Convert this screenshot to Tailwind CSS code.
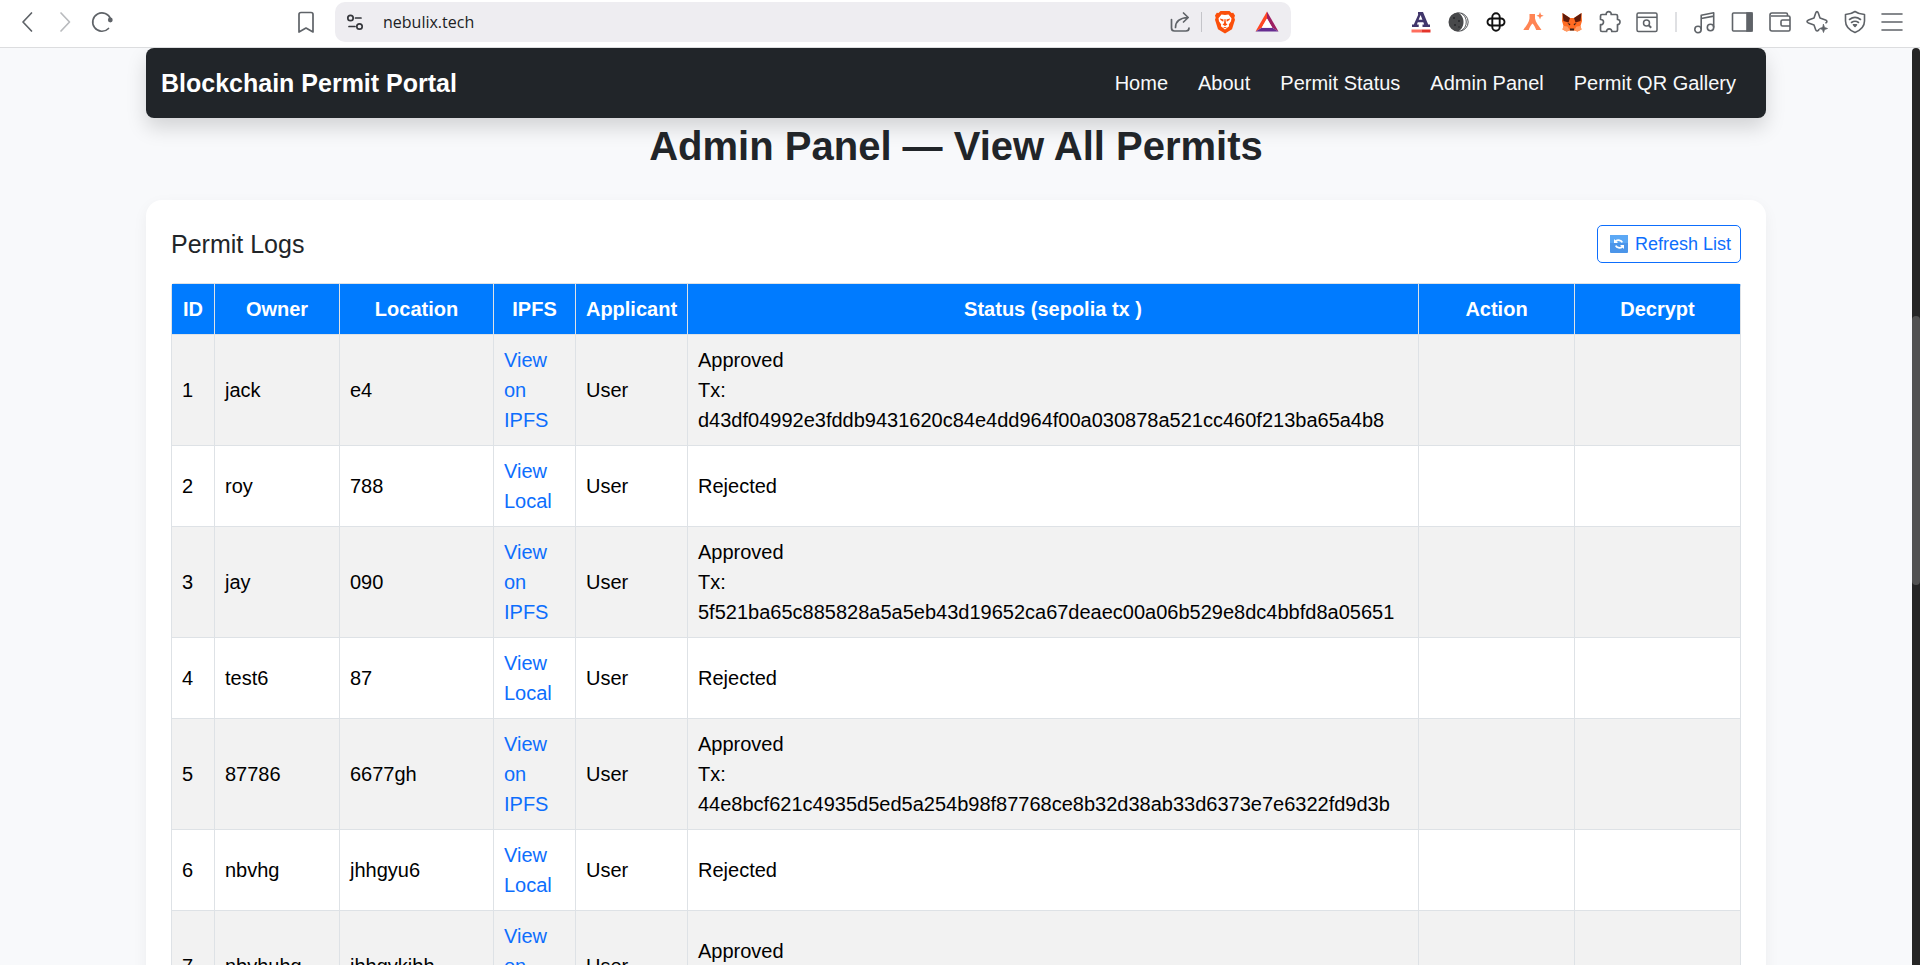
<!DOCTYPE html>
<html lang="en">
<head>
<meta charset="utf-8">
<title>Blockchain Permit Portal</title>
<script src="https://cdn.jsdelivr.net/npm/@tailwindcss/browser@4"></script>
</head>
<body class="flex h-screen flex-col overflow-hidden bg-[#f8f9fb] font-['Liberation_Sans',Arial,sans-serif] text-xl/[30px] text-[#212529]">

<!-- Browser toolbar -->
<header class="flex h-12 shrink-0 items-center border-b border-[#dcdddf] bg-white pr-4 pb-1 pl-[14px] text-[#5f6368]">
  <div class="flex gap-[14px]">
    <button aria-label="Back"><svg class="size-6" viewBox="0 0 24 24" fill="none" stroke="currentColor" stroke-width="1.7" stroke-linecap="round" stroke-linejoin="round"><path d="M17.500 3L9 12l8.500 9"/></svg></button>
    <button aria-label="Forward"><svg class="size-6 text-[#b9bbbe]" viewBox="0 0 24 24" fill="none" stroke="currentColor" stroke-width="1.7" stroke-linecap="round" stroke-linejoin="round"><path d="M9 3l8.500 9L9 21"/></svg></button>
    <button aria-label="Reload"><svg class="size-6" viewBox="0 0 24 24" fill="none" stroke="currentColor" stroke-width="1.7" stroke-linecap="round"><path d="M18.500 18.500A9.200 9.200 0 1 1 20.600 9"/><circle cx="20.300" cy="10" r="2.400" fill="currentColor" stroke="none"/></svg></button>
  </div>
  <button aria-label="Bookmark this page" class="ml-[180px]"><svg class="size-6" viewBox="0 0 24 24" fill="none" stroke="currentColor" stroke-width="1.7" stroke-linejoin="round"><path d="M7 2.500h10a2 2 0 0 1 2 2V22l-7-4-7 4V4.500a2 2 0 0 1 2-2z"/></svg></button>
  <div class="ml-[17px] flex h-10 flex-1 items-center rounded-[10px] bg-[#eeedf1] pr-3 pl-2">
    <button aria-label="Site information"><svg class="size-6" viewBox="0 0 24 24" fill="none" stroke="#35373c" stroke-width="1.7" stroke-linecap="round"><circle cx="7.500" cy="8" r="2.700"/><path d="M12.500 8h5.500M6 16.500h6"/><circle cx="16.500" cy="16.500" r="2.700"/></svg></button>
    <input aria-label="Address" value="nebulix.tech" class="ml-4 min-w-0 flex-1 bg-transparent font-['Open_Sans','Noto_Sans',sans-serif] text-base text-[#202124] outline-none">
    <button aria-label="Share"><svg class="size-6" viewBox="0 0 24 24" fill="none" stroke="currentColor" stroke-width="1.7" stroke-linecap="round" stroke-linejoin="round"><path d="M3.500 9.500V18a3 3 0 0 0 3 3H18a3 3 0 0 0 3-3"/><path d="M7.500 17.500c0-6 4-9.500 12.500-10M15.500 3l4.700 4.500-4.700 4.500"/></svg></button>
    <span class="mx-[9px] h-5 w-px bg-[#c4c4c9]"></span>
    <button aria-label="Brave Shields"><svg class="ml-[2px] size-6" viewBox="0 0 24 24"><path d="M7.500 1h9l2 2 1.700-.2L22 5.500l-.7 2.200.7 2-3 9.500L12 23.500 5 19.200 2 9.700l.7-2L2 5.500l1.800-2.700L5.500 3z" fill="#fb4f0b"/><path d="M8.500 4.500L12 5l3.500-.5 3 3.800-.5 3-2.200 3.200.3 1.800L12 19.500l-4.100-3.200.3-1.800L6 11.300l-.5-3z" fill="#fff"/><path d="M7 8.500l3.600 1-.4 2.200L7.500 10zM17 8.500l-3.600 1 .4 2.200 2.700-1.700zM11.500 9h1l.5 4.200 1.500 1.300L12 16l-2.500-1.500 1.500-1.300zM10 17h4l-2 1.300z" fill="#fb4f0b"/></svg></button>
    <button aria-label="Brave Rewards" class="ml-[18px]"><svg class="size-6" viewBox="0 0 24 24"><path d="M12 1.500L.5 21.500l6.200-3.700L12 8.500z" fill="#ff4724"/><path d="M12 1.500l11.500 20-6.200-3.700L12 8.500z" fill="#9e1f63"/><path d="M.5 21.500h23l-6.200-3.700H6.700z" fill="#662d91"/><path d="M12 8.500l5.300 9.300H6.700z" fill="#fff"/></svg></button>
  </div>
  <div class="ml-[118px] flex w-[250px] justify-between">
    <button aria-label="Font extension"><svg class="size-6" viewBox="0 0 24 24"><path d="M9 2h5l5.200 12.500H21V17h-7.500v-2.500h1.700l-.9-2.300H8.800l-.9 2.300h1.800V17H3v-2.500h1.800l4.500-10H9zM9.700 9.700h3.700L11.600 5z" fill="#41366b"/><path d="M2.500 19.500h10v3h-10z" fill="#ff6e5e"/><path d="M12.500 19.500h9v3h-9z" fill="#e4342b"/></svg></button>
    <button aria-label="Dark mode extension"><svg class="size-6" viewBox="0 0 24 24"><circle cx="12" cy="12" r="9.200" fill="#fff" stroke="#55575a" stroke-width="1"/><path d="M11 2.500a9.500 9.500 0 1 0 0 19c3-1.500 5.500-5 5.500-9.500S14 4 11 2.500z" fill="#48494b"/><path d="M14 3.200a10 10 0 0 1 0 17.600" fill="none" stroke="#55575a"/><g fill="#252628"><circle cx="7" cy="8" r="1"/><circle cx="12" cy="11" r="1"/><circle cx="8" cy="15" r="1"/><circle cx="12" cy="17" r=".8"/></g></svg></button>
    <button aria-label="Wallet connector extension"><svg class="size-6" viewBox="0 0 24 24" fill="none" stroke="#111" stroke-width="1.900"><path d="M8.300 15.500V7a3.700 3.700 0 0 1 7.400 0v1.500M8.500 8.500H17a3.500 3.500 0 0 1 0 7h-1.500M15.700 8.500V17a3.700 3.700 0 0 1-7.400 0v-1.500M15.500 15.500H7a3.500 3.500 0 0 1 0-7h1.500"/></svg></button>
    <button aria-label="Assistant extension"><svg class="size-6" viewBox="0 0 24 24" fill="#ff8454"><path d="M7.500 4H13v4.500c.6 4 3.500 7 6.500 11.500h-5.300c-1-2.800-2.200-4.800-3.700-6.500-1.600 1.700-2.800 3.700-3.800 6.500H1.300C4.300 15.500 7 12.500 7.500 8.500z"/><path d="M18 2l1 2.700 2.700 1-2.700 1L18 9.500l-1-2.800-2.600-1 2.600-1z"/></svg></button>
    <button aria-label="MetaMask"><svg class="size-6" viewBox="0 0 24 24"><path d="M2.500 3L10 8h4l7.500-5 .5 8-1.500 5 1 3.500-4 2-3-1h-5l-3 1-4-2 1-3.500L2 11z" fill="#ff6b22"/><path d="M2.500 3L10 8l-1.500 4.500L3.500 11zM21.500 3L14 8l1.500 4.500 5-1.500z" fill="#5f1b0b"/><path d="M3.500 16l4 .5 2.500 4-3.500 1-4-2zM20.500 16l-4 .5-2.500 4 3.500 1 4-2z" fill="#ff9a63"/><path d="M7.500 13l3 1-1 1.500zM16.500 13l-3 1 1 1.500zM10 18.500h4v2h-4z" fill="#30211d"/></svg></button>
    <button aria-label="Extensions"><svg class="size-6" viewBox="0 0 24 24" fill="none" stroke="currentColor" stroke-width="1.7" stroke-linejoin="round"><path d="M5 4.500h4.200C9 2.700 10.300 1.700 11.700 1.700s2.700 1 2.500 2.800H19a1.500 1.500 0 0 1 1.500 1.500v3.500c1.500-.1 2.500 1.100 2.500 2.500s-1 2.600-2.500 2.500V20a1.500 1.500 0 0 1-1.500 1.500h-4.200c.1-1.600-1-2.700-2.600-2.700s-2.700 1.100-2.600 2.700H5A1.500 1.500 0 0 1 3.500 20v-5.300c1.900.1 3-1 3-2.600s-1.100-2.700-3-2.600V6A1.500 1.500 0 0 1 5 4.500z"/></svg></button>
    <button aria-label="Search tabs"><svg class="size-6" viewBox="0 0 24 24" fill="none" stroke="currentColor" stroke-width="1.500"><rect x="2" y="3" width="20" height="18.500" rx="1.500"/><path d="M2 7.300h20"/><circle cx="11.500" cy="13" r="3"/><path d="M13.700 15.200l2.500 2.500" stroke-width="2"/></svg></button>
  </div>
  <span class="mx-4 h-5 w-[2px] bg-[#dfe0e3]"></span>
  <div class="flex w-[211px] justify-between">
    <button aria-label="Media controls"><svg class="size-6" viewBox="0 0 24 24" fill="none" stroke="currentColor" stroke-width="1.600" stroke-linejoin="round"><circle cx="5" cy="19.500" r="3.200"/><circle cx="17.500" cy="17.500" r="3.200"/><path d="M8.200 19.500V5.200L20.700 2.800v14.700M8.200 8.500l12.500-2.400"/></svg></button>
    <button aria-label="Side panel"><svg class="size-6" viewBox="0 0 24 24" fill="none" stroke="currentColor" stroke-width="1.600"><rect x="2.500" y="3" width="19.500" height="18" rx="1"/><path d="M17 3h5v18h-5z" fill="currentColor"/></svg></button>
    <button aria-label="Wallet"><svg class="size-6" viewBox="0 0 24 24" fill="none" stroke="currentColor" stroke-width="1.600" stroke-linejoin="round"><path d="M19.500 6.300V4.500A1.500 1.500 0 0 0 18 3H4a2 2 0 0 0-2 2v14a2 2 0 0 0 2 2h16.500a1.500 1.500 0 0 0 1.500-1.500v-12A1.500 1.500 0 0 0 20.500 6H3M22 10h-7.500a1.500 1.500 0 0 0-1.500 1.500v3a1.500 1.500 0 0 0 1.500 1.500H22"/></svg></button>
    <button aria-label="Leo AI"><svg class="size-6" viewBox="0 0 24 24" fill="none" stroke="currentColor" stroke-width="1.600" stroke-linejoin="round" stroke-linecap="round"><path d="M14 19.500c-1 1.800-2.700 2-3.300.2L9 15l-5.500-2c-2-.8-2-2.200 0-3L9 8l1.700-5c.7-1.900 1.900-1.900 2.600 0L15 8l5.500 2c1.700.7 1.900 2 .5 2.800"/><path d="M18.500 14.500l1 3 3 1-3 1-1 3-1-3-3-1 3-1z" fill="currentColor" stroke-width=".8"/></svg></button>
    <button aria-label="VPN"><svg class="size-6" viewBox="0 0 24 24" fill="none" stroke="currentColor" stroke-width="1.600" stroke-linejoin="round" stroke-linecap="round"><path d="M12 1.500c2.500 1.800 5.500 2.700 9.500 3v6.500c0 5-3.500 9-9.500 11.500C6 20 2.500 16 2.500 11V4.500c4-.3 7-1.200 9.500-3z"/><path d="M6.500 9.500c3.500-2.700 7.500-2.700 11 0M8.500 12.500c2.300-1.700 4.700-1.700 7 0"/><path d="M10.500 14.700h3L12 16.500z" fill="currentColor"/></svg></button>
    <button aria-label="Menu"><svg class="size-6" viewBox="0 0 24 24" fill="none" stroke="currentColor" stroke-width="1.600" stroke-linecap="round"><path d="M2 4h20M2 12h20M2 20h20"/></svg></button>
  </div>
</header>

<div class="flex min-h-0 flex-1">
  <!-- Web page -->
  <div class="min-w-0 flex-1 overflow-hidden">
    <div class="mx-auto max-w-[1620px]">
      <nav class="flex h-[70px] items-center justify-between rounded-lg bg-[#212529] pr-[30px] pl-[15px] text-[#f8f9fa] shadow-[0_10px_20px_rgba(0,0,0,0.15)]">
        <a href="#" class="text-[25px]/[38px] font-bold text-white">Blockchain Permit Portal</a>
        <ul class="flex gap-[30px]">
          <li><a href="#">Home</a></li>
          <li><a href="#">About</a></li>
          <li><a href="#">Permit Status</a></li>
          <li><a href="#">Admin Panel</a></li>
          <li><a href="#">Permit QR Gallery</a></li>
        </ul>
      </nav>

      <main>
        <h1 class="mt-1 mb-[30px] text-center text-[40px]/[48px] font-bold">Admin Panel — View All Permits</h1>

        <section class="rounded-2xl bg-white p-[25px] shadow-[0_5px_15px_rgba(0,0,0,0.05)]">
          <div class="mb-[20px] flex items-center justify-between">
            <h2 class="text-[25px]/[38px]">Permit Logs</h2>
            <button class="flex h-[38px] items-center gap-[7px] rounded-[5px] border border-[#0d6efd] pr-[9px] pl-3 text-lg text-[#0d6efd]">
              <svg class="size-[18px]" viewBox="0 0 18 18" aria-hidden="true"><rect width="18" height="18" rx="1" fill="#4b95e9"/><path d="M0 0h18v8H0z" fill="#5ba8f5"/><path d="M5 7.800C5.500 6 7.500 5 9.500 5.300c1.500.2 2.300 1 2.800 2M13 10.200c-.5 1.800-2.500 2.800-4.500 2.500-1.500-.2-2.300-1-2.800-2" fill="none" stroke="#fff" stroke-width="1.700"/><path d="M4 4v4h4zM14 14v-4h-4z" fill="#fff"/></svg>
              Refresh List
            </button>
          </div>

          <div class="overflow-hidden rounded-[4px]">
            <table class="w-full table-fixed border-collapse text-left text-black [&_td]:border [&_td]:border-[#dee2e6] [&_td]:p-[10px] [&_th]:border [&_th]:border-[#dee2e6] [&_th]:py-[10px] [&_a]:text-[#0d6efd]">
              <colgroup>
                <col class="w-[43px]"><col class="w-[125px]"><col class="w-[154px]"><col class="w-[82px]"><col class="w-[112px]"><col><col class="w-[156px]"><col class="w-[166px]">
              </colgroup>
              <thead class="bg-[#007bff] text-center text-white">
                <tr><th>ID</th><th>Owner</th><th>Location</th><th>IPFS</th><th>Applicant</th><th>Status (sepolia tx )</th><th>Action</th><th>Decrypt</th></tr>
              </thead>
              <tbody class="[&>tr:nth-child(odd)]:bg-[#f2f2f2]">
                <tr><td>1</td><td>jack</td><td>e4</td><td><a href="#">View on IPFS</a></td><td>User</td><td>Approved<br>Tx: d43df04992e3fddb9431620c84e4dd964f00a030878a521cc460f213ba65a4b8</td><td></td><td></td></tr>
                <tr><td>2</td><td>roy</td><td>788</td><td><a href="#">View Local</a></td><td>User</td><td>Rejected</td><td></td><td></td></tr>
                <tr><td>3</td><td>jay</td><td>090</td><td><a href="#">View on IPFS</a></td><td>User</td><td>Approved<br>Tx: 5f521ba65c885828a5a5eb43d19652ca67deaec00a06b529e8dc4bbfd8a05651</td><td></td><td></td></tr>
                <tr><td>4</td><td>test6</td><td>87</td><td><a href="#">View Local</a></td><td>User</td><td>Rejected</td><td></td><td></td></tr>
                <tr><td>5</td><td>87786</td><td>6677gh</td><td><a href="#">View on IPFS</a></td><td>User</td><td>Approved<br>Tx: 44e8bcf621c4935d5ed5a254b98f87768ce8b32d38ab33d6373e7e6322fd9d3b</td><td></td><td></td></tr>
                <tr><td>6</td><td>nbvhg</td><td>jhhgyu6</td><td><a href="#">View Local</a></td><td>User</td><td>Rejected</td><td></td><td></td></tr>
                <tr><td>7</td><td>nbvhuhg</td><td>jhhgvkjbh</td><td><a href="#">View on IPFS</a></td><td>User</td><td>Approved<br>Tx:</td><td></td><td></td></tr>
              </tbody>
            </table>
          </div>
        </section>
      </main>
    </div>
  </div>

  <!-- Scrollbar -->
  <div class="w-2 shrink-0 rounded-t-full bg-[#262626] pt-[268px]" aria-hidden="true">
    <div class="h-[269px] rounded-full bg-[#525252]"></div>
  </div>
</div>
</body>
</html>
